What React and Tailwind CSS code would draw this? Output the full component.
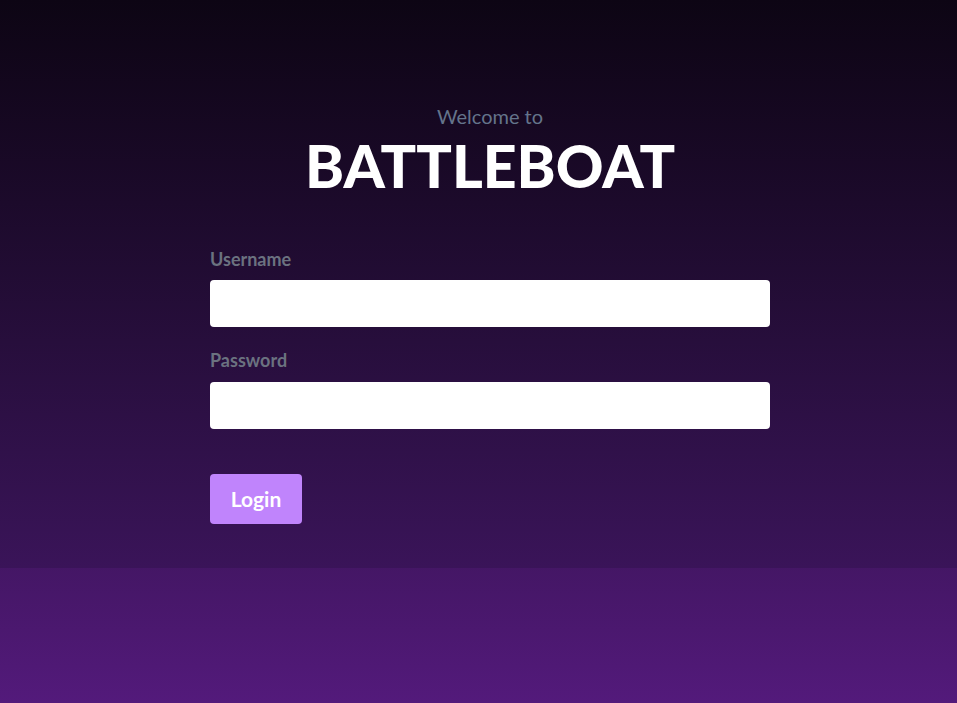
import { useState } from "react";

const App = () => {
  const [username, setUsername] = useState("");
  const [password, setPassword] = useState("");

  return (
    <div
      className="min-h-screen flex flex-col bg-gradient-to-b from-[#0d0514] to-[#531a7b]"
      style={{ fontFamily: "Lato, 'Open Sans', sans-serif" }}
    >
      {/* Login section */}
      <div className="bg-gradient-to-b from-[#0d0514] to-[#3a1459] pt-[104px] pb-[44px]">
        <div className="w-[560px] ml-[210px]">
          <p className="text-center text-[20px] text-[#64748b] leading-6">
            Welcome to
          </p>
          <h1 className="text-center text-[59px] font-black text-white leading-[72px] mt-[2px]">
            BATTLEBOAT
          </h1>

          <form
            className="mt-[47px]"
            onSubmit={(e) => e.preventDefault()}
          >
            <label className="block text-[18px] font-bold text-[#6b7280] leading-5 mb-[11px]">
              Username
            </label>
            <input
              type="text"
              value={username}
              onChange={(e) => setUsername(e.target.value)}
              className="block w-full h-[47px] bg-white rounded px-3 outline-none"
            />

            <label className="block text-[18px] font-bold text-[#6b7280] leading-5 mt-[23px] mb-[12px]">
              Password
            </label>
            <input
              type="password"
              value={password}
              onChange={(e) => setPassword(e.target.value)}
              className="block w-full h-[47px] bg-white rounded px-3 outline-none"
            />

            <button
              type="submit"
              className="mt-[45px] w-[92px] h-[50px] bg-[#c084fc] text-white text-[21px] font-bold rounded"
            >
              Login
            </button>
          </form>
        </div>
      </div>
    </div>
  );
};

export default App;
